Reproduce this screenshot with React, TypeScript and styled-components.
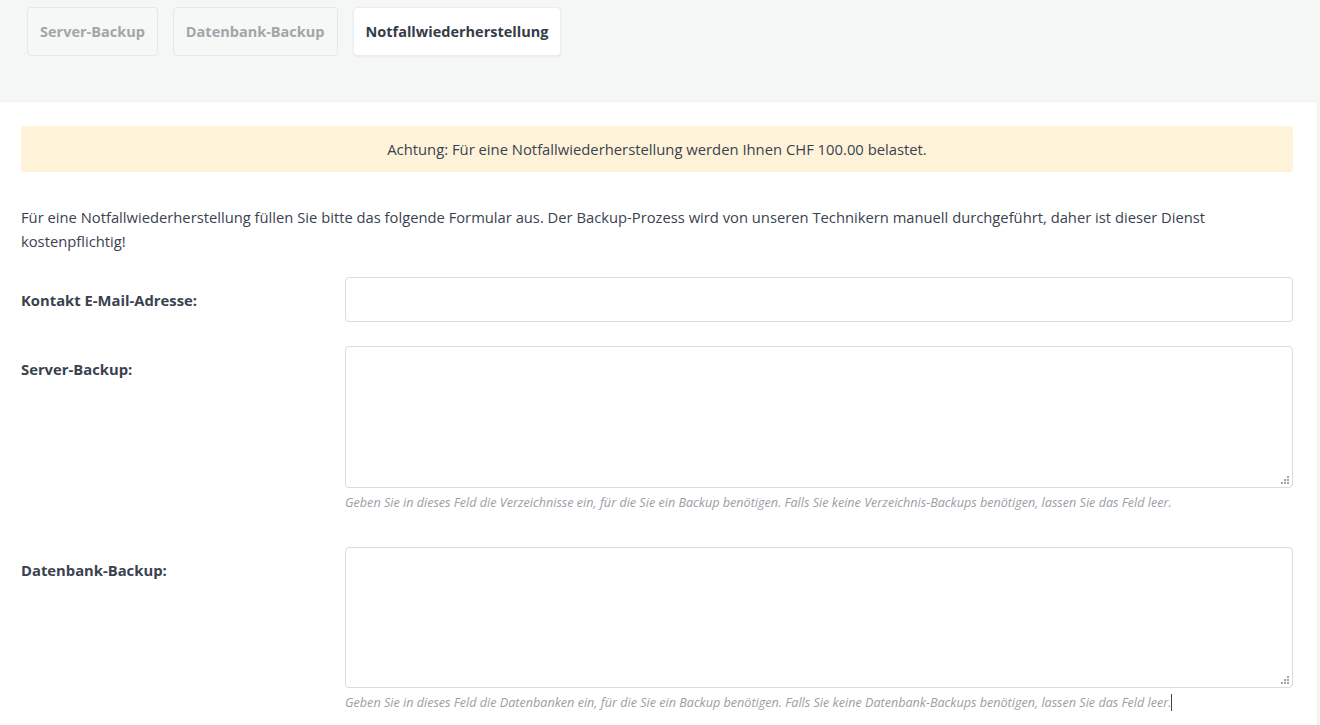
import React from "react";
import styled, { createGlobalStyle } from "styled-components";

const GlobalStyle = createGlobalStyle`
  html, body {
    margin: 0;
    padding: 0;
    background: #f5f6f6;
    font-family: "Open Sans", "Liberation Sans", sans-serif;
    color: #3a4250;
  }
  * { box-sizing: border-box; }
`;

const Page = styled.div`
  min-height: 725px;
  display: flex;
  flex-direction: column;
`;

const TabBar = styled.div`
  height: 102px;
  display: flex;
  align-items: flex-start;
  gap: 15px;
  padding: 7px 0 0 27px;
`;

const Tab = styled.button<{ $active?: boolean }>`
  height: 49px;
  padding: 0 12px;
  border: 1px solid ${p => (p.$active ? "#ececec" : "#e6e8e8")};
  border-radius: 4px;
  background: ${p => (p.$active ? "#ffffff" : "#f6f7f7")};
  box-shadow: ${p => (p.$active ? "0 1px 2px rgba(0,0,0,0.05)" : "none")};
  color: ${p => (p.$active ? "#353c47" : "#a3a5a8")};
  font-family: inherit;
  font-size: 14.5px;
  font-weight: 700;
  cursor: pointer;
`;

const Panel = styled.div`
  flex: 1;
  background: #ffffff;
  margin-right: 3px;
  border-top-right-radius: 4px;
  box-shadow: 0 0 2px rgba(0, 0, 0, 0.08);
  padding: 24px 24px 0 21px;
`;

const Alert = styled.div`
  height: 46px;
  display: flex;
  align-items: center;
  justify-content: center;
  background: #fef3d8;
  border-radius: 4px;
  font-size: 14.8px;
  color: #3a4250;
`;

const Intro = styled.p`
  margin: 33px 0 24px;
  font-size: 14.75px;
  line-height: 24px;
`;

const FormRow = styled.div`
  display: grid;
  grid-template-columns: 324px 1fr;
  margin-bottom: 24px;
`;

const Label = styled.label`
  padding-top: 11px;
  font-size: 14.8px;
  line-height: 24px;
  font-weight: 700;
  color: #3a4250;
`;

const Field = styled.div`
  display: flex;
  flex-direction: column;
`;

const Input = styled.input`
  height: 45px;
  width: 100%;
  border: 1px solid #dcdcdc;
  border-radius: 4px;
  padding: 0 12px;
  font-family: inherit;
  font-size: 15px;
  outline: none;
`;

const AreaWrap = styled.div`
  position: relative;
`;

const TextArea = styled.textarea<{ $tall?: boolean }>`
  display: block;
  width: 100%;
  height: ${p => (p.$tall ? 142 : 141)}px;
  border: 1px solid #dcdcdc;
  border-radius: 4px;
  padding: 10px 12px;
  font-family: inherit;
  font-size: 15px;
  resize: none;
  outline: none;
`;

const Grip = styled.svg`
  position: absolute;
  right: 4px;
  bottom: 4px;
  width: 9px;
  height: 9px;
  pointer-events: none;
`;

const Help = styled.span`
  display: block;
  margin: 6px 0 11px;
  font-size: 12.6px;
  line-height: 18px;
  font-style: italic;
  color: #9a9ea5;
`;

const Caret = styled.span`
  display: inline-block;
  width: 1px;
  height: 17px;
  background: #444;
  vertical-align: -4px;
`;

const ResizeGrip = () => (
  <Grip viewBox="0 0 9 9">
    <g fill="#a4a4a4">
      <rect x="7" y="1" width="2" height="2" />
      <rect x="4" y="4" width="2" height="2" />
      <rect x="7" y="4" width="2" height="2" />
      <rect x="1" y="7" width="2" height="2" />
      <rect x="4" y="7" width="2" height="2" />
      <rect x="7" y="7" width="2" height="2" />
    </g>
  </Grip>
);

const tabs = ["Server-Backup", "Datenbank-Backup", "Notfallwiederherstellung"];

export default function App() {
  return (
    <Page>
      <GlobalStyle />
      <TabBar>
        {tabs.map((t, i) => (
          <Tab key={t} $active={i === 2}>{t}</Tab>
        ))}
      </TabBar>
      <Panel>
        <Alert>Achtung: Für eine Notfallwiederherstellung werden Ihnen CHF 100.00 belastet.</Alert>
        <Intro>
          Für eine Notfallwiederherstellung füllen Sie bitte das folgende Formular aus. Der Backup-Prozess wird von
          unseren Technikern manuell durchgeführt, daher ist dieser Dienst kostenpflichtig!
        </Intro>
        <FormRow>
          <Label>Kontakt E-Mail-Adresse:</Label>
          <Field>
            <Input type="email" />
          </Field>
        </FormRow>
        <FormRow>
          <Label>Server-Backup:</Label>
          <Field>
            <AreaWrap>
              <TextArea $tall />
              <ResizeGrip />
            </AreaWrap>
            <Help>
              Geben Sie in dieses Feld die Verzeichnisse ein, für die Sie ein Backup benötigen. Falls Sie keine
              Verzeichnis-Backups benötigen, lassen Sie das Feld leer.
            </Help>
          </Field>
        </FormRow>
        <FormRow>
          <Label>Datenbank-Backup:</Label>
          <Field>
            <AreaWrap>
              <TextArea />
              <ResizeGrip />
            </AreaWrap>
            <Help>
              Geben Sie in dieses Feld die Datenbanken ein, für die Sie ein Backup benötigen. Falls Sie keine
              Datenbank-Backups benötigen, lassen Sie das Feld leer.<Caret />
            </Help>
          </Field>
        </FormRow>
      </Panel>
    </Page>
  );
}
